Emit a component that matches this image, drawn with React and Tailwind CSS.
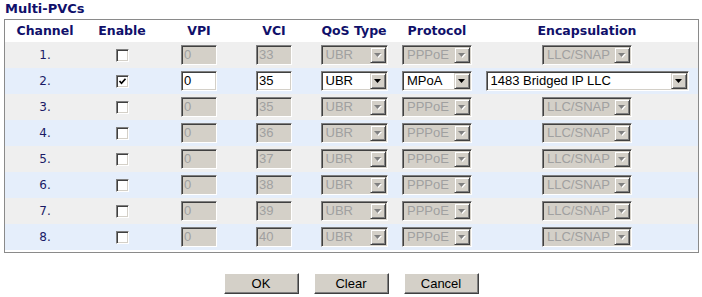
import React from "react";

const cols = [
  "w-[80px]",
  "ml-[7px] w-[60px]",
  "ml-[27px] w-[40px]",
  "ml-[35px] w-[40px]",
  "ml-[24px] w-[72px]",
  "ml-[9px] w-[76px]",
  "ml-[8px] w-[208px]",
];

const headers = ["Channel", "Enable", "VPI", "VCI", "QoS Type", "Protocol", "Encapsulation"];

const rows = [
  { ch: 1, on: false, vpi: "0", vci: "33" },
  { ch: 2, on: true, vpi: "0", vci: "35", proto: "MPoA", encap: "1483 Bridged IP LLC" },
  { ch: 3, on: false, vpi: "0", vci: "35" },
  { ch: 4, on: false, vpi: "0", vci: "36" },
  { ch: 5, on: false, vpi: "0", vci: "37" },
  { ch: 6, on: false, vpi: "0", vci: "38" },
  { ch: 7, on: false, vpi: "0", vci: "39" },
  { ch: 8, on: false, vpi: "0", vci: "40" },
];

const inset =
  "border border-t-[#808080] border-l-[#808080] border-b-white border-r-white shadow-[inset_1px_1px_0_#404040,inset_-1px_-1px_0_#d4d0c8]";

function TextBox({ value, disabled }) {
  return (
    <div
      className={`${inset} h-[20px] w-[36px] pl-[2px] text-[13px] leading-[18px] ${
        disabled ? "bg-[#d4d0c8] text-[#a0a0a0]" : "bg-white text-black"
      }`}
    >
      {value}
    </div>
  );
}

function Select({ value, disabled, width }) {
  return (
    <div
      className={`${inset} ${width} flex h-[20px] items-center justify-between pl-[4px] pr-[1px] text-[13px] ${
        disabled ? "bg-[#d4d0c8] text-[#a0a0a0]" : "bg-white text-black"
      }`}
    >
      <span className="whitespace-nowrap leading-[16px]">{value}</span>
      <span className="flex h-[16px] w-[16px] shrink-0 items-center justify-center border border-t-[#d4d0c8] border-l-[#d4d0c8] border-b-[#404040] border-r-[#404040] bg-[#d4d0c8] shadow-[inset_1px_1px_0_#fff,inset_-1px_-1px_0_#808080]">
        <svg width="8" height="5" viewBox="0 0 8 5">
          {disabled && <path d="M1 1h7L4.5 5z" fill="#fff" />}
          <path d="M0 0h7L3.5 4z" fill={disabled ? "#808080" : "#000"} />
        </svg>
      </span>
    </div>
  );
}

function Check({ on }) {
  return (
    <div className={`${inset} flex h-[13px] w-[13px] items-center justify-center bg-white`}>
      {on && (
        <svg width="9" height="9" viewBox="0 0 9 9">
          <path d="M1.5 4 L3.5 6.2 L7.5 1.8" fill="none" stroke="#000" strokeWidth="1.7" />
        </svg>
      )}
    </div>
  );
}

function Button({ children }) {
  return (
    <button className="h-[21px] w-[75px] border border-t-white border-l-white border-b-[#404040] border-r-[#404040] bg-[#d4d0c8] text-[13px] leading-[17px] text-black shadow-[inset_-1px_-1px_0_#808080]">
      {children}
    </button>
  );
}

export default function App() {
  return (
    <div className="h-[297px] w-[702px] bg-white font-['Liberation_Sans',Arial,sans-serif]">
      <div className="h-[19px] pl-[5px] font-['DejaVu_Sans',Verdana,sans-serif] text-[13px] font-bold leading-[18px] text-[#10106a]">
        Multi-PVCs
      </div>

      {/* table box */}
      <div className="ml-[4px] w-[695px] border border-[#8a8a8a] pb-[2px]">
        <div className="flex h-[22px] items-center font-['DejaVu_Sans',Verdana,sans-serif] text-[12.5px] font-bold text-[#10106a]">
          {headers.map((h, i) => (
            <div key={h} className={`${cols[i]} flex justify-center whitespace-nowrap`}>
              {h}
            </div>
          ))}
        </div>

        {rows.map((r, idx) => {
          const dis = !r.on;
          return (
            <div
              key={r.ch}
              className={`flex h-[26px] items-center ${idx % 2 === 0 ? "bg-[#efefef]" : "bg-[#e5eefb]"}`}
            >
              <div className={`${cols[0]} flex justify-center font-['DejaVu_Sans',Verdana,sans-serif] text-[12px] text-[#1a1a66]`}>
                {r.ch}.
              </div>
              <div className={`${cols[1]} flex justify-center`}>
                <Check on={r.on} />
              </div>
              <div className={`${cols[2]} flex justify-center`}>
                <TextBox value={r.vpi} disabled={dis} />
              </div>
              <div className={`${cols[3]} flex justify-center`}>
                <TextBox value={r.vci} disabled={dis} />
              </div>
              <div className={`${cols[4]} flex justify-center`}>
                <Select value="UBR" disabled={dis} width="w-[67px]" />
              </div>
              <div className={`${cols[5]} flex justify-center`}>
                <Select value={r.proto || "PPPoE"} disabled={dis} width="w-[70px]" />
              </div>
              <div className={`${cols[6]} flex justify-center`}>
                {r.on ? (
                  <Select value={r.encap} width="w-[203px]" />
                ) : (
                  <Select value="LLC/SNAP" disabled width="w-[90px]" />
                )}
              </div>
            </div>
          );
        })}
      </div>

      <div className="mt-[20px] flex justify-center gap-[15px]">
        <Button>OK</Button>
        <Button>Clear</Button>
        <Button>Cancel</Button>
      </div>
    </div>
  );
}
